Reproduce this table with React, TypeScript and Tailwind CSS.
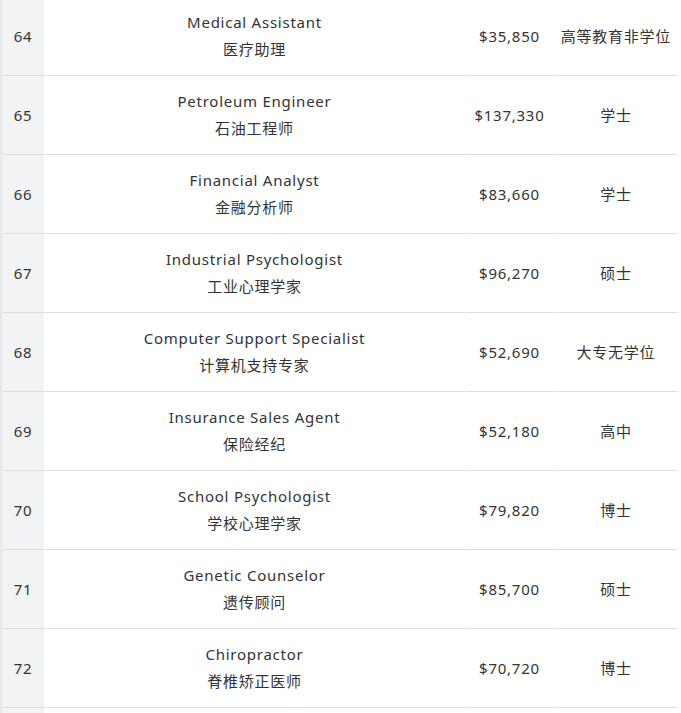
const rows = [
  { n: 64, en: "Medical Assistant", zh: "医疗助理", pay: "$35,850", deg: "高等教育非学位" },
  { n: 65, en: "Petroleum Engineer", zh: "石油工程师", pay: "$137,330", deg: "学士" },
  { n: 66, en: "Financial Analyst", zh: "金融分析师", pay: "$83,660", deg: "学士" },
  { n: 67, en: "Industrial Psychologist", zh: "工业心理学家", pay: "$96,270", deg: "硕士" },
  { n: 68, en: "Computer Support Specialist", zh: "计算机支持专家", pay: "$52,690", deg: "大专无学位" },
  { n: 69, en: "Insurance Sales Agent", zh: "保险经纪", pay: "$52,180", deg: "高中" },
  { n: 70, en: "School Psychologist", zh: "学校心理学家", pay: "$79,820", deg: "博士" },
  { n: 71, en: "Genetic Counselor", zh: "遗传顾问", pay: "$85,700", deg: "硕士" },
  { n: 72, en: "Chiropractor", zh: "脊椎矫正医师", pay: "$70,720", deg: "博士" },
  { n: 73, en: "", zh: "", pay: "", deg: "" },
];

export default function App() {
  return (
    <div className="w-[681px] h-[713px] overflow-hidden bg-white">
      <div
        className="-mt-[3px] border-l-2 border-[#e6e8eb] text-[15px] text-[#333] tracking-[0.75px]"
        style={{ fontFamily: '"Noto Sans", "Noto Sans CJK SC", sans-serif' }}
      >
        {rows.map((r) => (
          <div key={r.n} className="flex h-[79px] gap-px">
            <div className="w-[42px] flex items-center justify-center bg-[#f2f3f5] border-b border-[#dddddd]">
              {r.en && r.n}
            </div>
            <div className="w-[419px] flex flex-col items-center justify-center border-b border-[#dddddd] leading-[27px]">
              <span>{r.en}</span>
              <span>{r.zh}</span>
            </div>
            <div className="w-[89px] flex items-center justify-center border-b border-[#dddddd]">
              {r.pay}
            </div>
            <div className="w-[122px] flex items-center justify-center border-b border-[#dddddd]">
              {r.deg}
            </div>
          </div>
        ))}
      </div>
    </div>
  );
}
